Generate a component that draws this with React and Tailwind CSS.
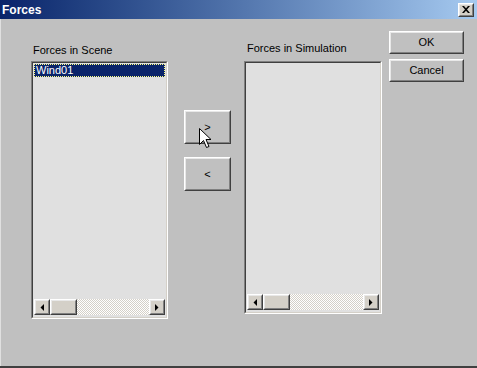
const face = "bg-[#c0c0c0]";

function Raised({ className = "", children }) {
  return (
    <div className={`border border-t-white border-l-white border-b-[#404040] border-r-[#404040] ${className}`}>
      <div className="w-full h-full border border-t-[#e8e8e8] border-l-[#e8e8e8] border-b-[#808080] border-r-[#808080] flex items-center justify-center">
        {children}
      </div>
    </div>
  );
}

function Arrow({ dir }) {
  return (
    <svg width="4" height="7" viewBox="0 0 4 7">
      {dir === "left" ? <polygon points="4,0 4,7 0.5,3.5" fill="#000" /> : <polygon points="0,0 0,7 3.5,3.5" fill="#000" />}
    </svg>
  );
}

function HScroll({ thumb }) {
  return (
    <div className="h-[16px] flex mx-[1px] mb-[2px]">
      <Raised className="w-[16px] h-[16px] bg-[#d4d0c8]">
        <Arrow dir="left" />
      </Raised>
      <Raised className={`${thumb} h-[16px] bg-[#d4d0c8]`} />
      <div className="flex-1 bg-[conic-gradient(#ffffff_25%,#d4d0c8_0_50%,#ffffff_0_75%,#d4d0c8_0)] bg-[length:2px_2px]" />
      <Raised className="w-[16px] h-[16px] bg-[#d4d0c8]">
        <Arrow dir="right" />
      </Raised>
    </div>
  );
}

function ListBox({ height, thumb, children }) {
  return (
    <div className={`${height} border border-t-[#808080] border-l-[#808080] border-b-white border-r-white`}>
      <div className="h-full border border-t-[#404040] border-l-[#404040] border-b-[#d4d0c8] border-r-[#d4d0c8] bg-[#e0e0e0] flex flex-col">
        <div className="flex-1 pt-[1px] px-[1px]">{children}</div>
        <HScroll thumb={thumb} />
      </div>
    </div>
  );
}

function Cursor() {
  return (
    <svg className="absolute left-[199px] top-[128px]" width="13" height="21" viewBox="0 0 13 21">
      <path d="M0.5 0.5 L0.5 16.5 L4.5 12.5 L7.5 19.5 L10 18.5 L7 11.5 L12 11.5 Z" fill="#fff" stroke="#000" strokeWidth="1" />
    </svg>
  );
}

export default function App() {
  return (
    <div className={`relative w-[477px] h-[368px] flex flex-col ${face} font-['Liberation_Sans',sans-serif] text-[11px] text-black border-b-2 border-b-[#404040]`}>
      <div className="h-[19px] bg-gradient-to-r from-[#0a246a] to-[#a6caf0] flex items-center justify-between pl-[2px] pr-[3px]">
        <span className="text-white font-bold text-[12px] leading-none">Forces</span>
        <Raised className="w-[16px] h-[14px] bg-[#d4d0c8]">
          <svg width="8" height="7" viewBox="0 0 8 7">
            <path d="M0 0 L2 0 L4 2.2 L6 0 L8 0 L5 3.5 L8 7 L6 7 L4 4.8 L2 7 L0 7 L3 3.5 Z" fill="#000" />
          </svg>
        </Raised>
      </div>
      <div className="flex-1 flex pl-[30px] pt-[12px] border-l border-l-[#e0e0e0]">
        <div className="w-[137px] mt-[12px] flex flex-col">
          <div className="h-[18px] pl-[2px] leading-[14px]">Forces in Scene</div>
          <ListBox height="h-[258px]" thumb="w-[27px]">
            <div className="h-[13px] bg-[#0a246a] text-white border border-dotted border-[#ffff80] leading-[11px] pl-[1px]">Wind01</div>
          </ListBox>
        </div>
        <div className="w-[47px] ml-[16px] mt-[79px] flex flex-col gap-[13px]">
          <Raised className="h-[34px]">
            <span className="leading-none">&gt;</span>
          </Raised>
          <Raised className="h-[34px]">
            <span className="leading-none">&lt;</span>
          </Raised>
        </div>
        <div className="w-[138px] ml-[13px] mt-[12px] flex flex-col">
          <div className="h-[18px] pl-[3px] leading-[10px]">Forces in Simulation</div>
          <ListBox height="h-[253px]" thumb="w-[27px]" />
        </div>
        <div className="w-[75px] ml-[7px] flex flex-col gap-[5px]">
          <Raised className="h-[23px]">OK</Raised>
          <Raised className="h-[23px]">Cancel</Raised>
        </div>
      </div>
      <Cursor />
    </div>
  );
}
